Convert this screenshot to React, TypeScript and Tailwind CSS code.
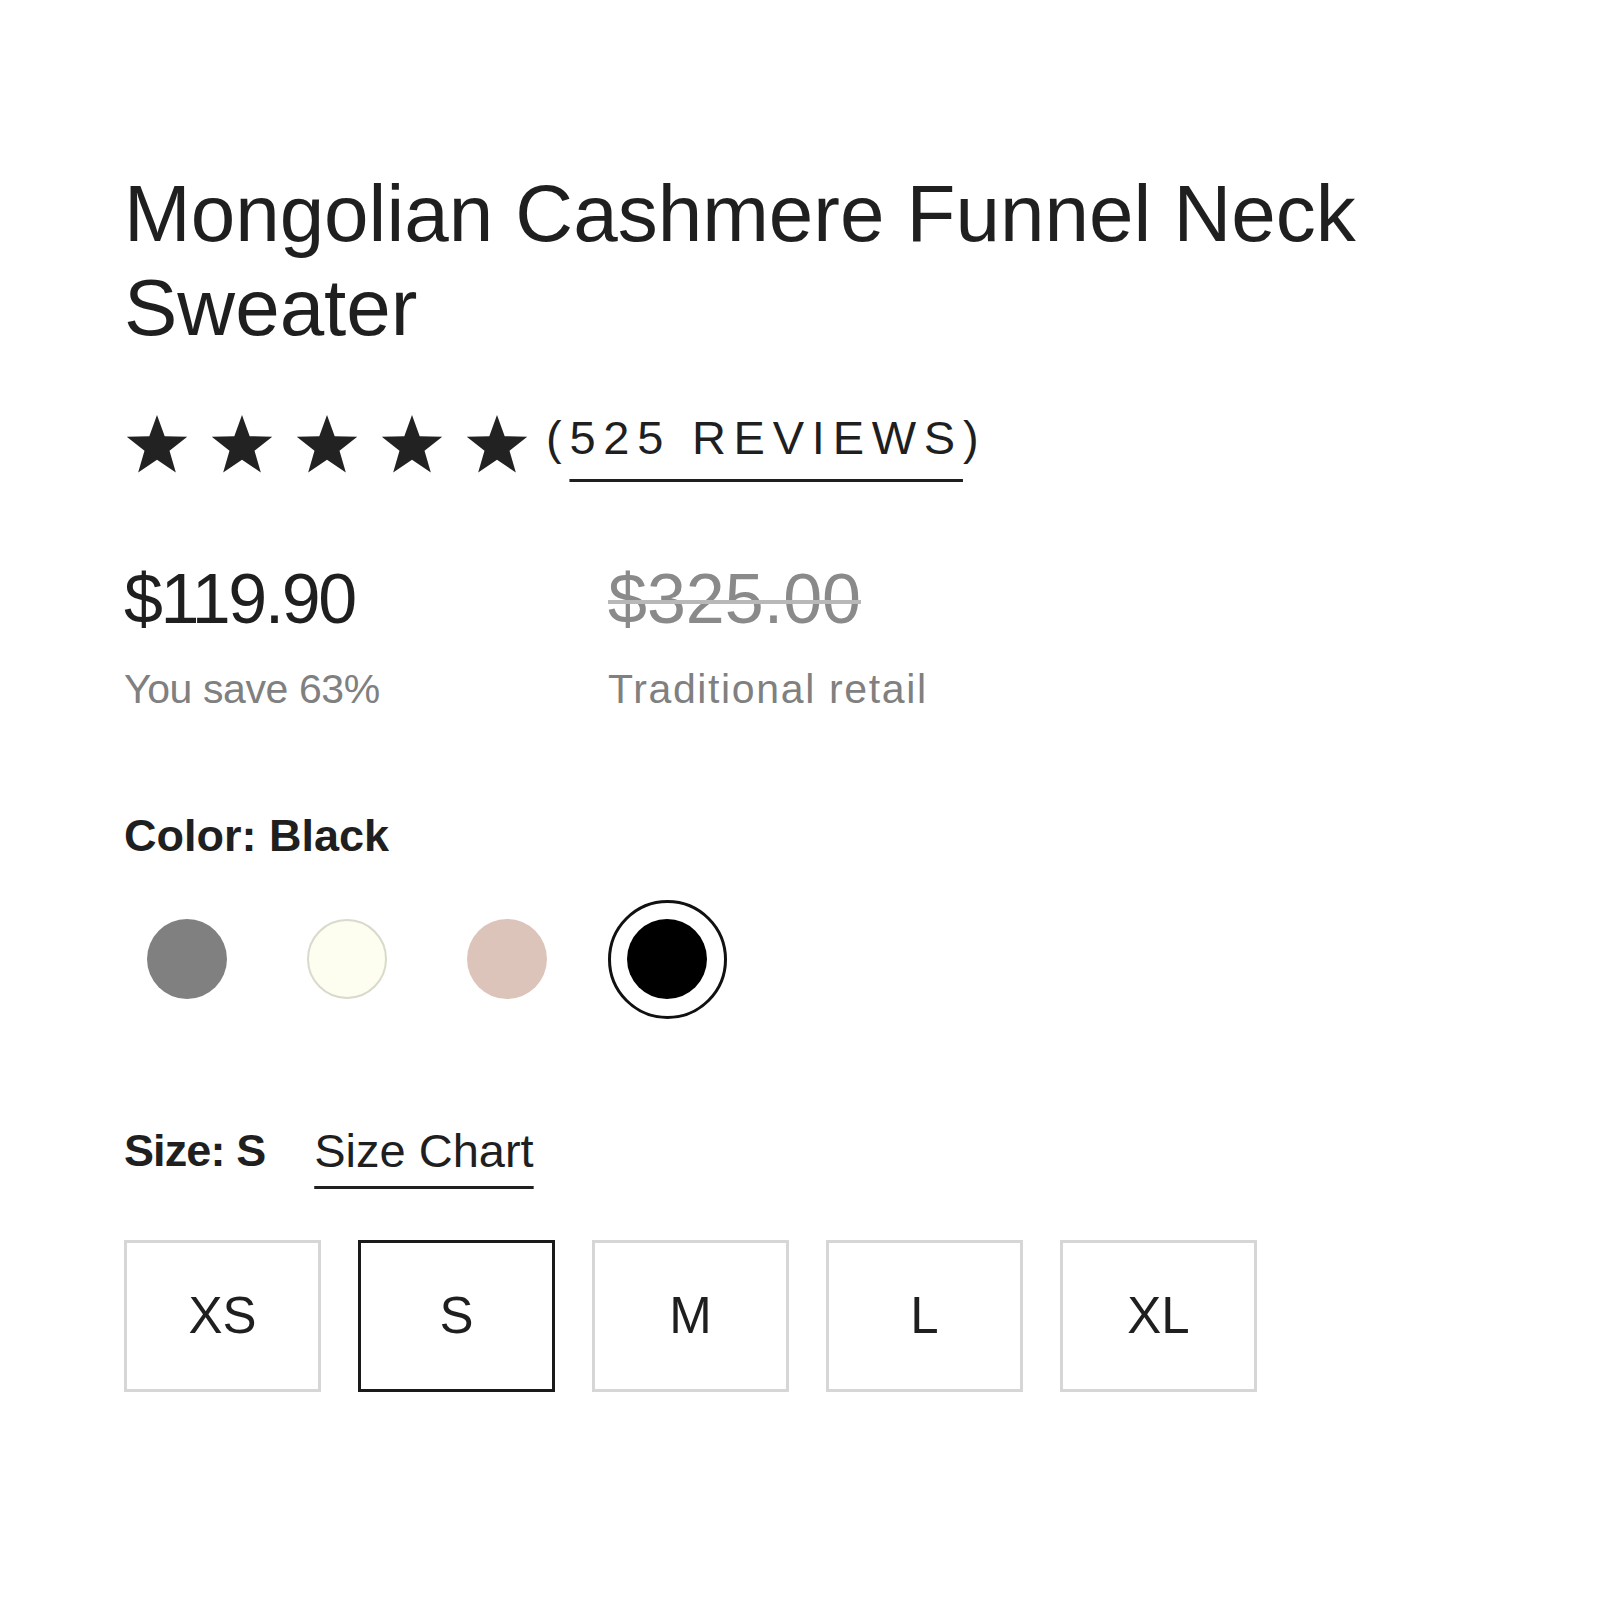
import React from "react";

const Star = () => (
  <svg width="66" height="64" viewBox="0 0 24 23" className="block">
    <path
      d="M12 0.6 L14.8 8.3 L23 8.5 L16.55 13.55 L18.85 21.5 L12 16.85 L5.15 21.5 L7.45 13.55 L1 8.5 L9.2 8.3 Z"
      fill="#222222"
    />
  </svg>
);

const sizes = ["XS", "S", "M", "L", "XL"];

export default function App() {
  const font = { fontFamily: '"Liberation Sans", Arial, sans-serif' };
  return (
    <div className="min-h-[1600px] w-[1600px] bg-white text-[#1f1f1f]" style={font}>
      <div className="pl-[124px] pt-[167px]">
        <h1 className="text-[80px] leading-[94px] font-normal text-[#1f1f1f] w-[1300px]">
          Mongolian Cashmere Funnel Neck Sweater
        </h1>

        <div className="mt-[58px] flex items-start">
          <div className="flex gap-[19px]">
            <Star />
            <Star />
            <Star />
            <Star />
            <Star />
          </div>
          <div className="ml-[16px] mt-[1px] text-[47px] leading-none tracking-[0.165em] font-normal text-[#1f1f1f]">
            (<span className="underline decoration-[3px] underline-offset-[25px]">525 REVIEWS</span>)
          </div>
        </div>

        <div className="mt-[87px] flex">
          <div className="w-[484px]">
            <div className="text-[70px] leading-none tracking-[-0.035em] text-[#1f1f1f]">$119.90</div>
            <div className="mt-[35px] text-[41px] leading-none tracking-[-0.01em] text-[#808080]">You save 63%</div>
          </div>
          <div>
            <div className="text-[70px] leading-none text-[#8a8a8a] line-through decoration-[#b8b8b8] decoration-[4px]">
              $325.00
            </div>
            <div className="mt-[35px] text-[41px] leading-none tracking-[0.04em] text-[#808080]">Traditional retail</div>
          </div>
        </div>

        <div className="mt-[103px] text-[45px] leading-none font-bold text-[#1f1f1f]">Color: Black</div>

        <div className="mt-[40px] pl-[2px] flex gap-[38px]">
          <div className="w-[122px] h-[122px] flex items-center justify-center">
            <div className="w-[80px] h-[80px] rounded-full bg-[#808080]" />
          </div>
          <div className="w-[122px] h-[122px] flex items-center justify-center">
            <div className="w-[80px] h-[80px] rounded-full bg-[#fdfdf0] border-2 border-[#d9d9cc]" />
          </div>
          <div className="w-[122px] h-[122px] flex items-center justify-center">
            <div className="w-[80px] h-[80px] rounded-full bg-[#dcc4ba]" />
          </div>
          <div className="w-[122px] h-[122px] flex items-center justify-center">
            <div className="w-[119px] h-[119px] rounded-full border-[3px] border-[#111] flex items-center justify-center">
              <div className="w-[80px] h-[80px] rounded-full bg-black" />
            </div>
          </div>
        </div>

        <div className="mt-[108px] flex items-start">
          <div className="text-[45px] leading-none font-bold tracking-[-0.02em] text-[#1f1f1f]">Size: S</div>
          <div className="ml-[49px] text-[47px] leading-none text-[#1f1f1f] underline decoration-[3px] underline-offset-[19px] -mt-[1px]">
            Size Chart
          </div>
        </div>

        <div className="mt-[66px] flex gap-[37px]">
          {sizes.map((s) => (
            <div
              key={s}
              className={
                s === "S"
                  ? "w-[197px] h-[152px] border-[3px] border-[#1a1a1a] flex items-center justify-center text-[51px] text-[#1f1f1f]"
                  : "w-[197px] h-[152px] border-[3px] border-[#d6d6d6] flex items-center justify-center text-[51px] text-[#1f1f1f]"
              }
            >
              {s}
            </div>
          ))}
        </div>
      </div>
    </div>
  );
}
